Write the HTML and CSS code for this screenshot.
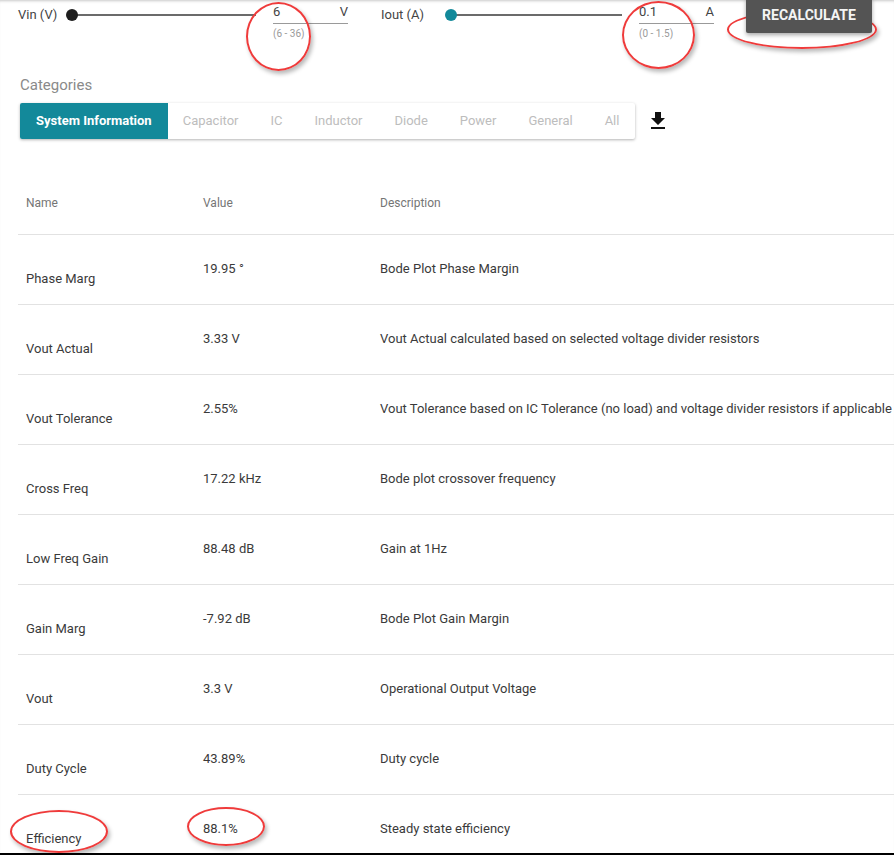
FILE: index.html
```html
<!DOCTYPE html>
<html>
<head>
<meta charset="utf-8">
<link rel="stylesheet" href="styles.css">
</head>
<body>
<div class="page">
  <div class="controls">
    <div class="label lbl-vin">Vin (V)</div>
    <div class="slider slider-vin"><span class="thumb thumb-dark"></span></div>
    <div class="field">
      <div class="field-line"><span>6</span><span>V</span></div>
      <div class="helper">(6 - 36)</div>
    </div>
    <div class="label lbl-iout">Iout (A)</div>
    <div class="slider slider-iout"><span class="thumb thumb-teal"></span></div>
    <div class="field">
      <div class="field-line"><span>0.1</span><span>A</span></div>
      <div class="helper">(0 - 1.5)</div>
    </div>
    <button class="recalc">RECALCULATE</button>
  </div>

  <div class="categories">Categories</div>
  <div class="tabrow">
    <div class="tabs">
      <div class="tab active">System Information</div>
      <div class="tab">Capacitor</div>
      <div class="tab">IC</div>
      <div class="tab">Inductor</div>
      <div class="tab">Diode</div>
      <div class="tab">Power</div>
      <div class="tab">General</div>
      <div class="tab">All</div>
    </div>
    <svg class="download" viewBox="0 0 24 24" width="24" height="24"><path d="M19 9h-4V3H9v6H5l7 7 7-7zM5 18v2h14v-2H5z" fill="#111"/></svg>
  </div>

  <div class="table">
    <div class="row head"><div>Name</div><div>Value</div><div>Description</div></div>
    <div class="row"><div class="name">Phase Marg</div><div>19.95 °</div><div>Bode Plot Phase Margin</div></div>
    <div class="row"><div class="name">Vout Actual</div><div>3.33 V</div><div>Vout Actual calculated based on selected voltage divider resistors</div></div>
    <div class="row"><div class="name">Vout Tolerance</div><div>2.55%</div><div>Vout Tolerance based on IC Tolerance (no load) and voltage divider resistors if applicable</div></div>
    <div class="row"><div class="name">Cross Freq</div><div>17.22 kHz</div><div>Bode plot crossover frequency</div></div>
    <div class="row"><div class="name">Low Freq Gain</div><div>88.48 dB</div><div>Gain at 1Hz</div></div>
    <div class="row"><div class="name">Gain Marg</div><div>-7.92 dB</div><div>Bode Plot Gain Margin</div></div>
    <div class="row"><div class="name">Vout</div><div>3.3 V</div><div>Operational Output Voltage</div></div>
    <div class="row"><div class="name">Duty Cycle</div><div>43.89%</div><div>Duty cycle</div></div>
    <div class="row"><div class="name">Efficiency</div><div>88.1%</div><div>Steady state efficiency</div></div>
  </div>

  <span class="mark mark-vin"></span>
  <span class="mark mark-iout"></span>
  <span class="mark mark-btn"></span>
  <span class="mark mark-eff"></span>
  <span class="mark mark-val"></span>
</div>
</body>
</html>
```

FILE: styles.css
```css
html, body {
  margin: 0;
  padding: 0;
  background: #fff;
  overflow: hidden;
}
body {
  font-family: Roboto, "Liberation Sans", sans-serif;
  color: #3a3a3a;
}
.page {
  position: relative;
  height: 853px;
  overflow: hidden;
  border-bottom: 2px solid #000;
  box-shadow: inset 0 3px 3px -2px rgba(0,0,0,0.22);
}
.controls {
  display: flex;
  align-items: flex-start;
  padding-left: 18px;
  height: 70px;
}
.label {
  font-size: 13px;
  line-height: 16px;
  margin-top: 7px;
  color: #444;
}
.lbl-vin { width: 48px; }
.lbl-iout { width: 64px; margin-left: 33px; }
.slider {
  position: relative;
  height: 30px;
}
.slider::before {
  content: "";
  position: absolute;
  left: 6px;
  right: 0;
  top: 14px;
  height: 2px;
  background: #6b6b6b;
}
.slider-vin { width: 190px; }
.slider-iout { width: 177px; }
.thumb {
  position: absolute;
  left: 0;
  top: 9px;
  width: 12px;
  height: 12px;
  border-radius: 50%;
}
.thumb-dark { background: #1e1e1e; }
.thumb-teal { background: #13899a; }
.field {
  width: 75px;
  margin-left: 17px;
}
.field-line {
  display: flex;
  justify-content: space-between;
  font-size: 13px;
  line-height: 16px;
  padding-top: 4px;
  height: 19px;
  border-bottom: 1px solid #9a9a9a;
  color: #444;
}
.helper {
  font-size: 10px;
  color: #9a9a9a;
  margin-top: 4px;
  line-height: 12px;
}
.recalc {
  position: relative;
  z-index: 2;
  margin-left: 32px;
  margin-top: -3px;
  width: 126px;
  height: 36px;
  border: none;
  border-radius: 2px;
  background: #545454;
  color: #f4f4f4;
  font-family: Roboto, "Liberation Sans", sans-serif;
  font-weight: 700;
  font-size: 14px;
  padding: 0;
  box-shadow: 0 2px 4px rgba(0,0,0,0.35);
}
.categories {
  margin-left: 20px;
  margin-top: 6px;
  font-size: 15px;
  line-height: 18px;
  color: #8a8a8a;
}
.tabrow {
  display: flex;
  align-items: center;
  margin-left: 20px;
  margin-top: 9px;
}
.tabs {
  display: flex;
  height: 36px;
  background: #fff;
  border-radius: 2px;
  box-shadow: 0 1px 3px rgba(0,0,0,0.3);
  overflow: hidden;
}
.tab {
  padding: 0 16px;
  font-size: 13px;
  line-height: 36px;
  color: #bdbdbd;
}
.tab:nth-child(2) { padding-left: 15px; }
.tab.active {
  background: #13899a;
  color: #fff;
  font-weight: 700;
}
.download {
  margin-left: 11px;
  display: block;
}
.table {
  margin-left: 18px;
  margin-top: 26px;
  width: 900px;
}
.row {
  display: grid;
  grid-template-columns: 177px 177px 1fr;
  height: 69px;
  border-bottom: 1px solid #e2e2e2;
  font-size: 13px;
  line-height: 16px;
  color: #3a3a3a;
}
.row > div {
  padding: 26px 8px 0;
  white-space: nowrap;
}
.row > .name {
  padding-top: 36px;
}
.row.head {
  font-size: 12px;
  color: #757575;
}
.row.head > div {
  padding-top: 30px;
}
.mark {
  position: absolute;
  z-index: 1;
  border: 2.5px solid #ef3b3b;
  border-radius: 50%;
  box-shadow: 2px 3px 4px rgba(0,0,0,0.28);
  box-sizing: border-box;
}
.mark-vin { left: 246px; top: 2px; width: 65px; height: 69px; }
.mark-iout { left: 622px; top: 1px; width: 73px; height: 68px; }
.mark-btn { left: 727px; top: 10px; width: 150px; height: 39px; }
.mark-eff { left: 10px; top: 810px; width: 98px; height: 43px; }
.mark-val { left: 187px; top: 807px; width: 78px; height: 39px; }
```
